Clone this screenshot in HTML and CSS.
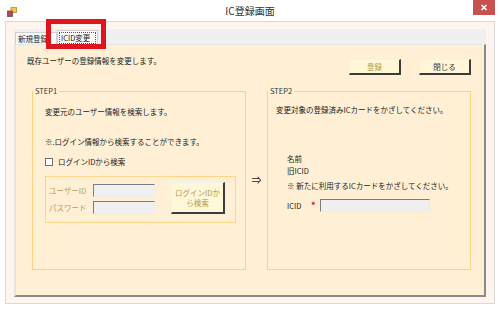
FILE: index.html
```html
<!DOCTYPE html>
<html lang="ja">
<head>
    <meta charset="UTF-8" />
    <title>IC登録画面</title>
    <link rel="stylesheet" href="styles.css">
</head>
<body>
<div class="window">

    <!-- タイトルバー -->
    <div class="titlebar">
        <div class="icon-box">
            <svg class="app-icon" width="10" height="10" viewBox="0 0 10 10">
                <rect x="4" y="0.5" width="5.5" height="5" fill="#f5c842" stroke="#b08a20" stroke-width="0.8"/>
                <rect x="0.5" y="4" width="5" height="5.5" fill="#d8362e" stroke="#7a4a50" stroke-width="0.8"/>
                <rect x="1.5" y="6" width="2" height="2" fill="#4a78c0"/>
            </svg>
        </div>
        <div class="title">IC登録画面</div>
        <div class="caption-box">
            <svg class="caption-x" width="22" height="15" viewBox="0 0 22 15">
                <rect x="0" y="0" width="22" height="15" fill="#c75050"/>
                <path d="M8.5 5 L13.5 10 M13.5 5 L8.5 10" stroke="#ffffff" stroke-width="1.6"/>
            </svg>
        </div>
    </div>

    <div class="client">
        <div class="tabstrip">
            <div class="tab">新規登録</div>
            <div class="tab active"><span class="focus">ICID変更</span></div>
        </div>

        <div class="page">
            <div class="head">
                <p>既存ユーザーの登録情報を変更します。</p>
                <div class="buttons">
                    <button class="btn off">登録</button>
                    <button class="btn">閉じる</button>
                </div>
            </div>

            <div class="steps">
                <fieldset class="step step1">
                    <legend>STEP1</legend>
                    <div class="step-body">
                        <p>変更元のユーザー情報を検索します。</p>
                        <p class="note">※.ログイン情報から検索することができます。</p>
                        <label class="check"><input type="checkbox"> ログインIDから検索</label>
                        <div class="login-box">
                            <span class="field-label">ユーザーID</span>
                            <input class="textbox" type="text" disabled>
                            <button class="btn login-btn">ログインIDか<br>ら検索</button>
                            <span class="field-label">パスワード</span>
                            <input class="textbox" type="password" disabled>
                        </div>
                    </div>
                </fieldset>

                <div class="arrow">⇒</div>

                <fieldset class="step step2">
                    <legend>STEP2</legend>
                    <div class="step-body">
                        <p>変更対象の登録済みICカードをかざしてください。</p>
                        <div class="card-info">
                            <p>名前</p>
                            <p class="old-id">旧ICID</p>
                            <p class="hint">※ 新たに利用するICカードをかざしてください。</p>
                            <div class="icid-row">
                                <span class="icid-label">ICID</span>
                                <span class="required">*</span>
                                <input class="textbox icid" type="text">
                            </div>
                        </div>
                    </div>
                </fieldset>
            </div>
        </div>
    </div>

    <!-- 注目枠 -->
    <div class="mark"></div>
</div>
</body>
</html>
```

FILE: styles.css
```css
* {
    margin: 0;
    padding: 0;
    box-sizing: border-box;
}

body {
    width: 500px;
    height: 309px;
    overflow: hidden;
    background: #fff;
    font-family: "Noto Sans CJK JP", "Liberation Sans", sans-serif;
    font-size: 7.5px;
    color: #222;
}

p {
    line-height: 10px;
}

.window {
    position: relative;
    height: 309px;
    display: flex;
    flex-direction: column;
}

/* タイトルバー */
.titlebar {
    height: 21px;
    flex: none;
    display: flex;
    align-items: flex-start;
}

.icon-box,
.caption-box {
    width: 27px;
    flex: none;
}

.app-icon {
    display: block;
    margin: 7px 0 0 7px;
}

.title {
    flex: 1;
    text-align: center;
    font-size: 10px;
    line-height: 14px;
    margin-top: 4px;
    color: #333;
}

.caption-x {
    display: block;
}

/* クライアント領域 */
.client {
    flex: 1;
    margin: 0 5px 5px;
    border: 1px solid #d9d9d9;
    background: #fff4ee;
    padding: 7px 8px 6px;
    display: flex;
    flex-direction: column;
}

.tabstrip {
    height: 15px;
    flex: none;
    display: flex;
    align-items: flex-end;
    background: #f0f0f0;
}

.tab {
    height: 12px;
    width: 42px;
    margin-left: 1px;
    border: 1px solid #cfcfcf;
    border-bottom: none;
    background: #f8f8f8;
    padding-left: 2px;
    line-height: 11px;
}

.tab.active {
    height: 14px;
    width: 41px;
    margin-left: 0;
    background: #fcfcfc;
    padding: 1px;
}

.focus {
    display: block;
    border: 1px dotted #555;
    line-height: 10px;
    padding: 0 1px;
}

.page {
    flex: 1;
    background: #ffefd5;
    border-left: 2px solid #e3e3e3;
    border-top: 1px solid #e6e6e6;
    border-right: 2px solid #8a8a8a;
    border-bottom: 2px solid #8a8a8a;
    padding: 11px 13px 0 11px;
}

.head {
    display: flex;
    justify-content: space-between;
    align-items: flex-start;
}

.buttons {
    display: flex;
    gap: 18px;
    margin-top: 3px;
}

.btn {
    width: 52px;
    height: 16px;
    padding: 0;
    font: inherit;
    color: #333;
    background: #fff7d7;
    border-style: solid;
    border-width: 1px 2px 2px 1px;
    border-color: #f2f2f2 #3c3c3c #3c3c3c #f2f2f2;
}

.btn.off {
    color: #b59a45;
}

/* STEP */
.steps {
    display: flex;
    margin: 11px 0 0 5px;
}

.step {
    height: 184px;
    margin: 0;
    padding: 0;
    min-width: 0;
    border: 1px solid #ffd27f;
}

.step1 { width: 214px; }
.step2 { width: 204px; }

.step legend {
    padding: 0 2px;
    line-height: 10px;
    color: #333;
}

.step1 .step-body { padding: 11px 0 0 12px; }
.step2 .step-body { padding: 9px 0 0 8px; }

.note {
    margin-top: 20px;
}

.check {
    margin-top: 10px;
    display: flex;
    align-items: center;
    gap: 5px;
    line-height: 10px;
}

.check input {
    appearance: none;
    width: 8px;
    height: 8px;
    border: 1px solid #707070;
    background: #fff;
}

.login-box {
    margin-top: 9px;
    width: 191px;
    height: 47px;
    border: 1px solid #ffd58a;
    padding: 7px 0 0 3px;
    display: grid;
    grid-template-columns: 44px 62px 70px;
    grid-template-rows: 13px 13px;
    row-gap: 4px;
}

.field-label {
    color: #b8a058;
    line-height: 13px;
}

.textbox {
    appearance: none;
    width: 62px;
    height: 13px;
    background: #f0f0f0;
    border: 1px solid;
    border-color: #7c7c7c #ececec #ececec #7c7c7c;
    outline: none;
}

.login-btn {
    grid-column: 3;
    grid-row: 1 / span 2;
    justify-self: end;
    align-self: start;
    width: 54px;
    height: 32px;
    margin-top: -2px;
    color: #b59a45;
    line-height: 10px;
    white-space: nowrap;
}

.arrow {
    width: 21px;
    text-align: center;
    font-size: 10px;
    line-height: 10px;
    margin-top: 89px;
}

.card-info {
    margin-top: 39px;
    padding-left: 11px;
}

.old-id { margin-top: 2px; }
.hint { margin-top: 5px; }

.icid-row {
    margin-top: 8px;
    display: flex;
    align-items: center;
}

.icid-label {
    width: 24px;
    line-height: 13px;
}

.required {
    width: 9px;
    color: #e01010;
    font-weight: bold;
    font-size: 9px;
    line-height: 13px;
}

.textbox.icid {
    width: 110px;
}

/* 注目枠 */
.mark {
    position: absolute;
    left: 46px;
    top: 19px;
    width: 60px;
    height: 30px;
    border: 5px solid #e0141e;
}
```
